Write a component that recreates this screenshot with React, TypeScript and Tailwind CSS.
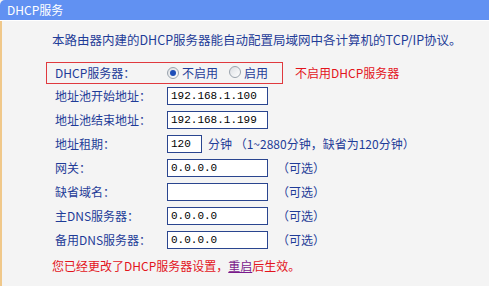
const font = { fontFamily: '"Noto Sans CJK SC", "Liberation Sans", sans-serif' };

const Radio = ({ checked }: { checked?: boolean }) => (
  <span className="inline-flex w-[12px] h-[12px] rounded-full border border-[#9aa3ad] bg-gradient-to-br from-[#dcdfe3] to-white items-center justify-center">
    {checked && <span className="w-[6px] h-[6px] rounded-full bg-[#1f4fb8]" />}
  </span>
);

const Field = ({ value, w = "w-[101px]" }: { value?: string; w?: string }) => (
  <div
    className={`${w} h-[18px] border border-[#2a458f] bg-white pl-[3px] leading-[16px] text-black`}
    style={{ fontFamily: '"Liberation Mono", "DejaVu Sans Mono", monospace', fontSize: "11px" }}
  >
    {value}
  </div>
);

const Row = ({ label, children }: { label: string; children: React.ReactNode }) => (
  <div className="flex items-center h-[24px] pl-[9px]">
    <div className="w-[112px] shrink-0">{label}</div>
    {children}
  </div>
);

const Optional = () => <span className="ml-[9px]">（可选）</span>;

export default function App() {
  return (
    <div className="w-[489px] h-[286px] overflow-hidden bg-[#f4f4f4] text-[12px] text-[#1f3c98]" style={font}>
      <div className="h-[20px] bg-[#6191f2] rounded-tl-[5px] pl-[7px] text-white leading-[20px]">DHCP服务</div>
      <div className="h-[1px] bg-white" />
      <div className="border-l-[2px] border-[#f0c88a] h-[265px] pl-[44px] pt-[10px]">
        <div className="ml-[6px] h-[18px] leading-[18px] text-[12.5px]">
          本路由器内建的DHCP服务器能自动配置局域网中各计算机的TCP/IP协议。
        </div>
        <div className="flex items-center mt-[13px]">
          <div className="w-[237px] h-[22px] border border-[#e0393e] flex items-center pl-[8px]">
            <div className="w-[112px] shrink-0">DHCP服务器：</div>
            <Radio checked />
            <span className="ml-[3px]">不启用</span>
            <span className="ml-[11px]"><Radio /></span>
            <span className="ml-[3px]">启用</span>
          </div>
          <span className="ml-[12px] text-[#e3141c]">不启用DHCP服务器</span>
        </div>
        <Row label="地址池开始地址："><Field value="192.168.1.100" /></Row>
        <Row label="地址池结束地址："><Field value="192.168.1.199" /></Row>
        <Row label="地址租期：">
          <Field value="120" w="w-[35px]" />
          <span className="ml-[6px]">分钟 （1~2880分钟，缺省为120分钟）</span>
        </Row>
        <Row label="网关："><Field value="0.0.0.0" /><Optional /></Row>
        <Row label="缺省域名："><Field /><Optional /></Row>
        <Row label="主DNS服务器："><Field value="0.0.0.0" /><Optional /></Row>
        <Row label="备用DNS服务器："><Field value="0.0.0.0" /><Optional /></Row>
        <div className="mt-[5px] ml-[6px] h-[18px] leading-[18px] text-[#e3141c]">
          您已经更改了DHCP服务器设置，<span className="underline text-[#7a1a8c]">重启</span>后生效。
        </div>
      </div>
    </div>
  );
}
